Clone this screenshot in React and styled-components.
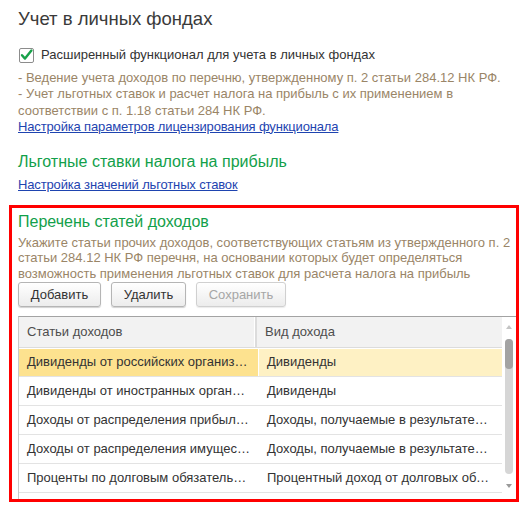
import React from "react";
import styled, { createGlobalStyle } from "styled-components";

const Global = createGlobalStyle`
  html, body { margin: 0; padding: 0; background: #fff; }
  body { font-family: "Liberation Sans", Arial, sans-serif; color: #333; }
`;

const Page = styled.div`
  width: 524px;
  height: 507px;
  overflow: hidden;
  display: flex;
  flex-direction: column;
`;

const Section = styled.div`
  padding-left: 18px;
  display: flex;
  flex-direction: column;
`;

const Title = styled.div`
  margin-top: 8px;
  font-size: 18.5px;
  line-height: 22px;
  color: #3a3a3a;
`;

const CheckRow = styled.label`
  margin-top: 17px;
  display: flex;
  align-items: center;
  gap: 7px;
  font-size: 13px;
  line-height: 16px;
  color: #333;
  padding-left: 1px;
`;

const Note = styled.div`
  margin-top: 7px;
  font-size: 13px;
  line-height: 16.3px;
  color: #9a8567;
`;

const Link = styled.a`
  display: block;
  align-self: flex-start;
  font-size: 13px;
  line-height: 16px;
  letter-spacing: -0.15px;
  color: #1e44b0;
  text-decoration: underline;
  margin-top: ${(p) => p.$mt || 0}px;
`;

const GroupTitle = styled.div`
  font-size: 16px;
  line-height: 19px;
  color: #12a04a;
  margin-top: ${(p) => p.$mt || 0}px;
`;

const Box = styled.div`
  margin: 12px 5px 0 9px;
  border: 3px solid #ff0000;
  height: 287px;
  box-sizing: content-box;
  padding: 4px 0 0 6px;
  display: flex;
  flex-direction: column;
  overflow: hidden;
`;

const Desc = styled.div`
  margin-top: 4px;
  font-size: 13px;
  line-height: 15.5px;
  color: #9a8567;
  padding-right: 2px;
`;

const Buttons = styled.div`
  margin-top: 0.5px;
  display: flex;
  gap: 10px;
`;

const Button = styled.button`
  height: 25px;
  width: ${(p) => p.$w}px;
  padding: 0;
  font-family: "Liberation Sans", Arial, sans-serif;
  font-size: 13px;
  color: ${(p) => (p.disabled ? "#a6a6a6" : "#333")};
  background: linear-gradient(#ffffff, #ececec);
  border: 1px solid ${(p) => (p.disabled ? "#d0d0d0" : "#b5b5b5")};
  border-radius: 3px;
  box-shadow: 0 1px 1px rgba(0, 0, 0, ${(p) => (p.disabled ? 0.08 : 0.18)});
`;

const Table = styled.div`
  margin-top: 9px;
  flex: 1;
  display: grid;
  grid-template-columns: 1fr 14px;
  border-top: 1px solid #a3a3a3;
  border-left: 1px solid #c8c8c8;
  min-height: 0;
  overflow: hidden;
`;

const Grid = styled.div`
  display: flex;
  flex-direction: column;
`;

const HeadRow = styled.div`
  display: grid;
  grid-template-columns: 238px 1fr;
  height: 30px;
  background: #f2f2f2;
  border-bottom: 1px solid #dcdcdc;
`;

const HeadCell = styled.div`
  padding-left: 8px;
  font-size: 13px;
  line-height: 30px;
  color: #4d4d4d;
  border-right: ${(p) => (p.$div ? "2px solid #dcdcdc" : "none")};
  box-shadow: ${(p) => (p.$div ? "inset -1px 0 0 #fff" : "none")};
`;

const Row = styled.div`
  display: grid;
  grid-template-columns: 239px 1fr;
  height: 28px;
  border-bottom: 1px solid #e3e3e3;
  gap: 1px;
`;

const Cell = styled.div`
  padding: 0 ${(p) => p.$pr || 8}px 0 8px;
  font-size: 13px;
  line-height: 28px;
  color: #333;
  white-space: nowrap;
  overflow: hidden;
  text-overflow: ellipsis;
  background: ${(p) => p.$bg || "transparent"};
  box-shadow: ${(p) => (p.$bg ? "inset 0 1px 0 #fff" : "none")};
`;

const Scroll = styled.div`
  display: flex;
  flex-direction: column;
  align-items: center;
  padding-top: 8px;
`;

const Arrow = styled.div`
  width: 0;
  height: 0;
  border-left: 3.5px solid transparent;
  border-right: 3.5px solid transparent;
  ${(p) =>
    p.$down
      ? "border-top: 4px solid #9a9a9a;"
      : "border-bottom: 4px solid #c4c4c4;"}
`;

const Track = styled.div`
  margin-top: 10px;
  width: 8px;
  height: 135px;
  border-radius: 4px;
  background: #d6d6d6;
  margin-bottom: 10px;
`;

const Thumb = styled.div`
  height: 30px;
  border-radius: 4px;
  background: #a3a3a3;
`;

const CheckBox = () => (
  <svg width="15" height="15" viewBox="0 0 15 15">
    <rect x="0.5" y="0.5" width="14" height="14" rx="1.5" fill="#fff" stroke="#8c8c8c" />
    <path d="M3 7.2 L6 10.6 L12.4 2.6" fill="none" stroke="#18a24a" strokeWidth="2.4" strokeLinecap="round" strokeLinejoin="round" />
  </svg>
);

const rows = [
  ["Дивиденды от российских организаций", "Дивиденды", true],
  ["Дивиденды от иностранных организаций", "Дивиденды"],
  ["Доходы от распределения прибыли иностранными организациями", "Доходы, получаемые в результате распределения прибыли"],
  ["Доходы от распределения имущества", "Доходы, получаемые в результате распределения имущества"],
  ["Проценты по долговым обязательствам", "Процентный доход от долговых обязательств"],
  ["", ""],
];

export default function App() {
  return (
    <Page>
      <Global />
      <Section>
        <Title>Учет в личных фондах</Title>
        <CheckRow>
          <CheckBox />
          Расширенный функционал для учета в личных фондах
        </CheckRow>
        <Note>
          - Ведение учета доходов по перечню, утвержденному п. 2 статьи 284.12 НК РФ.
          <br />- Учет льготных ставок и расчет налога на прибыль с их применением в соответствии с п. 1.18 статьи 284 НК РФ.
        </Note>
        <Link href="#">Настройка параметров лицензирования функционала</Link>
        <GroupTitle $mt={17}>Льготные ставки налога на прибыль</GroupTitle>
        <Link href="#" $mt={6}>Настройка значений льготных ставок</Link>
      </Section>
      <Box>
        <GroupTitle>Перечень статей доходов</GroupTitle>
        <Desc>
          Укажите статьи прочих доходов, соответствующих статьям из утвержденного п. 2 статьи 284.12 НК РФ перечня, на основании которых будет определяться возможность применения льготных ставок для расчета налога на прибыль
        </Desc>
        <Buttons>
          <Button $w={83}>Добавить</Button>
          <Button $w={75}>Удалить</Button>
          <Button $w={90} disabled>Сохранить</Button>
        </Buttons>
        <Table>
          <Grid>
            <HeadRow>
              <HeadCell $div>Статьи доходов</HeadCell>
              <HeadCell>Вид дохода</HeadCell>
            </HeadRow>
            {rows.map(([a, b, sel], i) => (
              <Row key={i}>
                <Cell $bg={sel ? "#fde28f" : undefined}>{a}</Cell>
                <Cell $bg={sel ? "#fef1c4" : undefined} $pr={11}>{b}</Cell>
              </Row>
            ))}
          </Grid>
          <Scroll>
            <Arrow />
            <Track>
              <Thumb />
            </Track>
            <Arrow $down />
          </Scroll>
        </Table>
      </Box>
    </Page>
  );
}
